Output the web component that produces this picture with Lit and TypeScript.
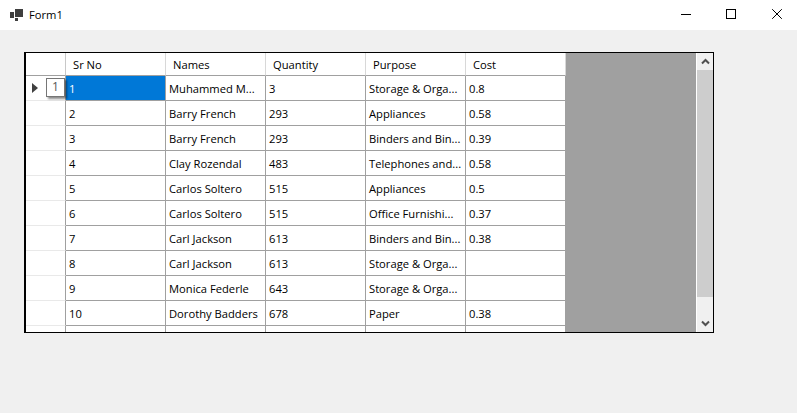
import { LitElement, html, css, svg } from "lit";
import { customElement } from "lit/decorators.js";

const COLS = ["Sr No", "Names", "Quantity", "Purpose", "Cost"];
const ROWS: string[][] = [
  ["1", "Muhammed M...", "3", "Storage & Orga...", "0.8"],
  ["2", "Barry French", "293", "Appliances", "0.58"],
  ["3", "Barry French", "293", "Binders and Bin...", "0.39"],
  ["4", "Clay Rozendal", "483", "Telephones and...", "0.58"],
  ["5", "Carlos Soltero", "515", "Appliances", "0.5"],
  ["6", "Carlos Soltero", "515", "Office Furnishi...", "0.37"],
  ["7", "Carl Jackson", "613", "Binders and Bin...", "0.38"],
  ["8", "Carl Jackson", "613", "Storage & Orga...", ""],
  ["9", "Monica Federle", "643", "Storage & Orga...", ""],
  ["10", "Dorothy Badders", "678", "Paper", "0.38"],
  ["", "", "", "", ""],
];

@customElement("app-root")
export class AppRoot extends LitElement {
  static styles = css`
    :host {
      display: block;
      width: 797px;
      height: 413px;
      background: #f0f0f0;
      font-family: "Open Sans", "Noto Sans", sans-serif;
      font-size: 11.2px;
      color: #000;
      overflow: hidden;
    }
    .title {
      height: 30px;
      background: #fff;
      display: flex;
      align-items: center;
    }
    .logo { margin-left: 10px; width: 13px; height: 12px; flex: none; margin-bottom: 1px; }
    .form { margin-left: 6px; font-size: 11.2px; flex: 1; color: #000; padding-bottom: 1px; }
    .wb {
      width: 46px;
      height: 28px;
      padding-bottom: 2px;
      display: flex;
      align-items: center;
      justify-content: center;
    }
    .wb.first { width: 44px; }
    .wb.last { width: 40px; margin-left: 3px; }
    .wb svg { display: block; }
    .content { padding: 22px 0 0 24px; }
    .dgv {
      position: relative;
      width: 687px;
      height: 279px;
      border-style: solid;
      border-color: #000;
      border-width: 1px 1px 1px 2px;
      background: #a0a0a0;
      display: flex;
      overflow: hidden;
    }
    .grid { flex: 1; min-width: 0; overflow: hidden; }
    .table { width: 540px; }
    .row { display: flex; height: 25px; background: #fff; }
    .row.head { height: 23px; }
    .rh {
      width: 39px;
      flex: none;
      border-right: 1px solid #a0a0a0;
      border-bottom: 1px solid #e9e9e9;
      height: 24px;
      display: flex;
      align-items: center;
    }
    .head .rh { height: 22px; border-right-color: #c8c8c8; border-bottom-color: #a0a0a0; }
    .cell {
      width: 96px;
      flex: none;
      padding-left: 3px;
      height: 24px;
      line-height: 25px;
      border-right: 1px solid #a0a0a0;
      border-bottom: 1px solid #a0a0a0;
      white-space: nowrap;
      overflow: hidden;
      color: #000;
    }
    .hc {
      width: 92px;
      flex: none;
      padding-left: 7px;
      height: 22px;
      line-height: 23px;
      border-right: 1px solid #d8d8d8;
      border-bottom: 1px solid #a0a0a0;
      color: #000;
    }
    .cell.sel { background: #0078d7; color: #fff; }
    .arrow { margin-left: 6px; display: block; }
    .tip {
      position: absolute;
      left: 20px;
      top: 25px;
      width: 17px;
      height: 17px;
      background: #fff;
      border: 1px solid #767676;
      box-shadow: 2px 2px 2px rgba(0, 0, 0, 0.45);
      text-align: center;
      line-height: 16px;
      font-size: 12px;
      color: #575757;
    }
    .sb {
      width: 17px;
      flex: none;
      background: #f0f0f0;
      border-left: 1px solid #fff;
      box-sizing: border-box;
      display: flex;
      flex-direction: column;
    }
    .btn { height: 17px; flex: none; display: flex; align-items: center; justify-content: center; background: #f0f0f0; }
    .track { height: 227px; background: #cdcdcd; flex: none; }
    .rest { flex: 1; display: flex; flex-direction: column; justify-content: flex-end; }
  `;

  render() {
    return html`
      <div class="title">
        <svg class="logo" viewBox="0 0 13 12">
          <path fill="#3f3f3f" d="M5 0h8v8H5z M0 3h4v6H0z M5 9h3v3H5z" />
        </svg>
        <span class="form">Form1</span>
        <div class="wb first"><svg width="10" height="10">${svg`<path d="M0 5.5h10" stroke="#000" />`}</svg></div>
        <div class="wb"><svg width="10" height="10">${svg`<rect x=".5" y=".5" width="9" height="9" fill="none" stroke="#000" />`}</svg></div>
        <div class="wb last"><svg width="10" height="10">${svg`<path d="M.2 .2l9.6 9.6M9.8 .2l-9.6 9.6" stroke="#000" />`}</svg></div>
      </div>
      <div class="content">
        <div class="dgv">
          <div class="grid">
            <div class="table">
              <div class="row head">
                <div class="rh"></div>
                ${COLS.map((c) => html`<div class="hc">${c}</div>`)}
              </div>
              ${ROWS.map(
                (r, i) => html`<div class="row">
                  <div class="rh">
                    ${i === 0
                      ? html`<svg class="arrow" width="6" height="10" viewBox="0 0 6 10"><path fill="#404040" d="M0 0l6 5-6 5z" /></svg>`
                      : ""}
                  </div>
                  ${r.map((v, j) => html`<div class="cell ${i === 0 && j === 0 ? "sel" : ""}">${v}</div>`)}
                </div>`,
              )}
            </div>
          </div>
          <div class="sb">
            <div class="btn">
              <svg width="9" height="7" viewBox="0 0 9 7"><path d="M1 5.5l3.5-3.5 3.5 3.5" fill="none" stroke="#505050" stroke-width="2" /></svg>
            </div>
            <div class="track"></div>
            <div class="rest">
              <div class="btn">
                <svg width="9" height="7" viewBox="0 0 9 7"><path d="M1 1.5l3.5 3.5 3.5-3.5" fill="none" stroke="#505050" stroke-width="2" /></svg>
              </div>
            </div>
          </div>
          <div class="tip">1</div>
        </div>
      </div>
    `;
  }
}
